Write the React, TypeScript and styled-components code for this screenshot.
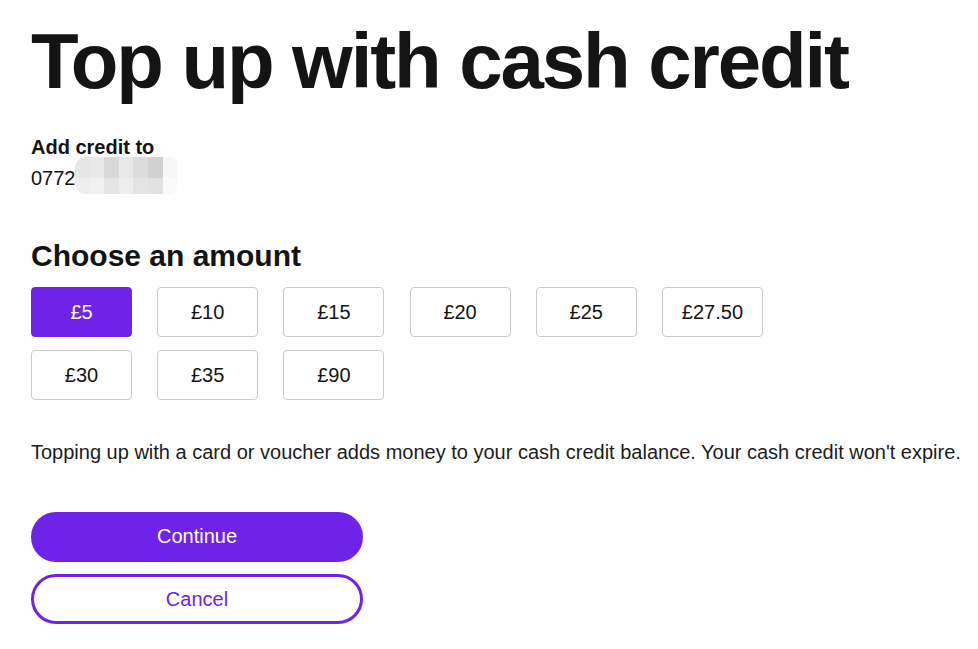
import React, { useState } from "react";
import styled, { createGlobalStyle } from "styled-components";

const GlobalStyle = createGlobalStyle`
  html, body { margin: 0; padding: 0; background: #ffffff; }
  body { font-family: "Liberation Sans", Arial, sans-serif; color: #141414; }
  * { box-sizing: border-box; }
`;

const PURPLE = "#6f23e8";

const Page = styled.main`
  display: flex;
  flex-direction: column;
  align-items: flex-start;
  padding: 21px 31px 20px;
`;

const Title = styled.h1`
  margin: 0;
  font-size: 78px;
  line-height: 80px;
  font-weight: 700;
  letter-spacing: -2.1px;
  color: #141414;
`;

const Recipient = styled.section`
  margin-top: 31px;
  font-size: 20px;
  line-height: 31px;
`;

const Label = styled.div`
  font-weight: 700;
`;

const Number = styled.div`
  position: relative;
`;

const Mosaic = styled.span`
  position: absolute;
  left: 44px;
  top: -6px;
  display: grid;
  grid-template-columns: repeat(7, 14.6px);
  grid-template-rows: 21px 16px;
  border-radius: 11px 8px 8px 11px;
  overflow: hidden;
`;

const Tile = styled.span<{ $c: string }>`
  background: ${(p) => p.$c};
`;

const Heading = styled.h2`
  margin: 46px 0 0;
  font-size: 30px;
  line-height: 32px;
  font-weight: 700;
`;

const Amounts = styled.div`
  margin-top: 15px;
  display: grid;
  grid-template-columns: repeat(6, 101px);
  column-gap: 25.2px;
  row-gap: 13px;
`;

const Amount = styled.button<{ $selected: boolean }>`
  height: 50px;
  border-radius: 4px;
  border: 1px solid ${(p) => (p.$selected ? PURPLE : "#cccccc")};
  background: ${(p) => (p.$selected ? PURPLE : "#ffffff")};
  color: ${(p) => (p.$selected ? "#ffffff" : "#141414")};
  font-family: "Liberation Sans", Arial, sans-serif;
  font-size: 20px;
  padding: 0;
  cursor: pointer;
`;

const Info = styled.p`
  margin: 40px 0 0;
  font-size: 20px;
  line-height: 24px;
  color: #1c1c1c;
  white-space: nowrap;
`;

const Actions = styled.div`
  margin-top: 48px;
  display: flex;
  flex-direction: column;
  gap: 12px;
  width: 332px;
`;

const Pill = styled.button<{ $primary?: boolean }>`
  height: 50px;
  width: 100%;
  border-radius: 25px;
  border: 3px solid ${PURPLE};
  background: ${(p) => (p.$primary ? PURPLE : "#ffffff")};
  color: ${(p) => (p.$primary ? "#ffffff" : PURPLE)};
  font-family: "Liberation Sans", Arial, sans-serif;
  font-size: 20px;
  padding: 0 0 ${(p) => (p.$primary ? "1px" : "0")};
  cursor: pointer;
`;

const tiles = [
  "#e6e6e6", "#e9e9e9", "#d8d8d8", "#e7e8e8", "#dcdcdc", "#d1d1d1", "#f6f7f8",
  "#eeeeee", "#f0f1f1", "#e5e5e5", "#ecedee", "#e4e4e4", "#e1e1e1", "#f9fafb",
];

const amounts = ["£5", "£10", "£15", "£20", "£25", "£27.50", "£30", "£35", "£90"];

export default function App() {
  const [selected, setSelected] = useState("£5");
  return (
    <>
      <GlobalStyle />
      <Page>
        <Title>Top up with cash credit</Title>
        <Recipient>
          <Label>Add credit to</Label>
          <Number>
            0772
            <Mosaic aria-hidden>
              {tiles.map((c, i) => (
                <Tile key={i} $c={c} />
              ))}
            </Mosaic>
          </Number>
        </Recipient>
        <Heading>Choose an amount</Heading>
        <Amounts>
          {amounts.map((a) => (
            <Amount key={a} $selected={a === selected} onClick={() => setSelected(a)}>
              {a}
            </Amount>
          ))}
        </Amounts>
        <Info>
          Topping up with a card or voucher adds money to your cash credit balance. Your cash credit won't expire.
        </Info>
        <Actions>
          <Pill $primary>Continue</Pill>
          <Pill>Cancel</Pill>
        </Actions>
      </Page>
    </>
  );
}
